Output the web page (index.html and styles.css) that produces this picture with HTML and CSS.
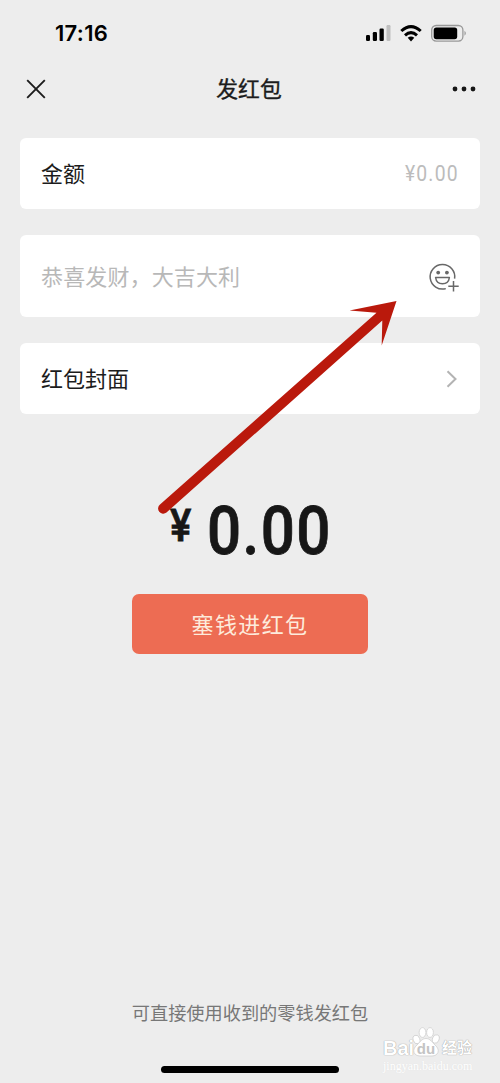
FILE: index.html
```html
<!DOCTYPE html>
<html lang="zh-CN">
<head>
<meta charset="utf-8">
<title>发红包</title>
<link rel="stylesheet" href="styles.css">
</head>
<body>
<div class="screen">
  <div class="status">
    <span class="time">17:16</span>
    <svg class="status-icons" width="104" height="20" viewBox="0 0 104 20">
      <rect x="1" y="11" width="4" height="6" rx="1.2"/>
      <rect x="7.800" y="8" width="4.200" height="9" rx="1.2"/>
      <rect x="14.500" y="4.500" width="4.300" height="12.500" rx="1.200"/>
      <rect x="21.500" y="1" width="4" height="16" rx="1.200" fill="#bfbfbf"/>
      <g fill="none" stroke="#000" stroke-width="3">
        <path d="M36.300 7Q46 -1.800 55.700 7"/>
        <path d="M40 11.300Q46 5.900 52 11.300"/>
      </g>
      <path d="M42.700 13.800Q46 11.300 49.300 13.800L46 17.400Z"/>
      <rect x="66.700" y="1.500" width="31.200" height="15.600" rx="4.500" fill="none" stroke="#999" stroke-width="1.300"/>
      <rect x="68.700" y="3.500" width="23.500" height="11.700" rx="2.600"/>
      <path d="M99.600 6.800Q101.600 9.300 99.600 11.800Z" fill="#777"/>
    </svg>
  </div>
  <div class="nav">
    <svg class="close" width="20" height="20" viewBox="0 0 20 20"><path d="M1.200 1.200L18.800 18.800M18.800 1.200L1.200 18.800" fill="none" stroke="#1c1c1c" stroke-width="1.900"/></svg>
    <span class="title">发红包</span>
    <svg class="more" width="24" height="6" viewBox="0 0 24 6" fill="#161616"><circle cx="3" cy="3" r="2.400"/><circle cx="12" cy="3" r="2.400"/><circle cx="21" cy="3" r="2.400"/></svg>
  </div>
  <div class="cards">
    <div class="card"><span class="label">金额</span><span class="value">¥0.00</span></div>
    <div class="card wish">
      <span class="placeholder">恭喜发财，大吉大利</span>
      <svg class="smile" width="32" height="30" viewBox="0 0 32 30" fill="none" stroke="#686868" stroke-width="1.500">
        <path d="M26.600 15.600A12.300 12.300 0 1 0 17.800 25.600"/>
        <path d="M7.600 14.500H21.400Q20.600 20.800 14.500 20.800T7.600 14.500Z" stroke-linejoin="round"/>
        <path d="M25.500 18V28.500M20.300 23.300H30.700"/>
        <g fill="#686868" stroke="none"><circle cx="10.200" cy="9.600" r="1.900"/><circle cx="18.900" cy="9.600" r="1.900"/></g>
      </svg>
    </div>
    <div class="card"><span class="label">红包封面</span>
      <svg class="chevron" width="12" height="18" viewBox="0 0 12 18"><path d="M1.500 1.200L9.500 9L1.500 16.800" fill="none" stroke="#b3b3b3" stroke-width="2"/></svg>
    </div>
  </div>
  <div class="total"><span class="yen">¥</span><span class="sum">0.00</span></div>
  <div class="send">塞钱进红包</div>
  <div class="note">可直接使用收到的零钱发红包</div>
  <div class="home"></div>

  <svg class="arrow" width="250" height="224" viewBox="0 0 250 224" fill="#ba190c">
    <path d="M240.500 3L193.500 12.500L220.500 14.800L4 206.500A5 5 0 0 0 10.500 214.500L226.300 22.500L225.700 47.500Z"/>
  </svg>
  <div class="watermark">
    <div class="brand">
      <span class="bai">Bai</span>
      <span class="paw">
        <svg width="28" height="30" viewBox="0 0 28 30" fill="#fff" stroke="#cfcfcf" stroke-width=".8">
          <ellipse cx="4.500" cy="12.500" rx="3.300" ry="4.400" transform="rotate(-20 4.500 12.500)"/>
          <ellipse cx="10.500" cy="5.500" rx="3.400" ry="4.900"/>
          <ellipse cx="18" cy="5.500" rx="3.400" ry="4.900"/>
          <ellipse cx="23.800" cy="12" rx="3.300" ry="4.400" transform="rotate(20 23.800 12)"/>
          <path d="M14 11.500C18 11.500 20 15 23 18C29 23 26 29 20 29H8C2 29 -1 23 5 18C8 15 10 11.500 14 11.500Z"/>
        </svg>
        <span class="du">du</span>
      </span>
      <span class="cn">经验</span>
    </div>
    <div class="domain">jingyan.baidu.com</div>
  </div>
</div>
</body>
</html>
```
FILE: styles.css
```css
* { box-sizing: border-box; }
body { margin: 0; }
svg { display: block; flex: none; }
.screen {
  position: relative;
  display: flex;
  flex-direction: column;
  width: 500px;
  height: 1083px;
  overflow: hidden;
  background: #ededed;
  color: #1c1c1c;
  font: 22px/30px "Liberation Sans", "Noto Sans CJK SC", sans-serif;
  white-space: nowrap;
}
.status {
  display: flex;
  justify-content: space-between;
  height: 60px;
  padding: 19px 31px 0 55px;
}
.time { font: 600 22px/28px Inter, sans-serif; color: #000; letter-spacing: .3px; }
.status-icons { margin-top: 5px; }
.nav {
  display: grid;
  grid-template-columns: 1fr auto 1fr;
  align-items: center;
  height: 57px;
  padding: 0 25px 0 25px;
}
.close { margin-left: 1px; }
.title { margin-right: 2px; padding-top: 2px; font-size: 21.800px; -webkit-text-stroke: .35px #1c1c1c; }
.more { justify-self: end; margin-right: -1px; }
.cards { display: flex; flex-direction: column; gap: 26px; padding: 21px 20px 0; }
.card {
  display: flex;
  align-items: center;
  justify-content: space-between;
  height: 71px;
  padding: 0 21px;
  border-radius: 6px;
  background: #fff;
}
.label { padding-top: 2px; }
.wish { height: 82px; padding-right: 20px; }
.placeholder { padding-top: 3px; color: #b8b8b8; letter-spacing: .13px; }
.smile { margin-top: 3px; }
.value {
  font: 400 21.500px/30px Roboto, sans-serif;
  color: #bcbcbc;
  letter-spacing: 1.300px;
  transform: scaleX(.9);
  transform-origin: right;
}
.chevron { margin-right: 1px; }
.total {
  display: flex;
  align-items: flex-start;
  height: 80px;
  margin-top: 91px;
  padding-left: 170px;
  color: #171717;
  font-family: Roboto, sans-serif;
  font-weight: 500;
  -webkit-text-stroke: .8px #171717;
}
.yen { width: 37px; font-size: 44px; line-height: 43px; }
.yen, .sum { transform: scaleX(.91); transform-origin: left; }
.sum { font-size: 66px; line-height: 54px; letter-spacing: 1.600px; }
.send {
  align-self: center;
  width: 236px;
  height: 60px;
  margin-top: 9px;
  border-radius: 7px;
  background: #ed6c53;
  color: #fdebdc;
  font-size: 22px;
  line-height: 63px;
  letter-spacing: 1.400px;
  text-align: center;
}
.note {
  margin-top: auto;
  color: #777;
  font-size: 18.200px;
  line-height: 28px;
  text-align: center;
}
.home {
  align-self: center;
  width: 178px;
  height: 7px;
  margin: 38px 0 10px;
  border-radius: 4px;
  background: #000;
}
.arrow { position: absolute; left: 156px; top: 298px; }
.watermark {
  position: absolute;
  left: 383px;
  top: 1027px;
  color: #fff;
  text-shadow: 0 0 1px #999, 0 0 1px #bbb;
}
.brand { display: flex; align-items: flex-end; height: 32px; font: bold 20px/22px "Liberation Sans", "Noto Sans CJK SC", sans-serif; }
.bai { width: 29px; }
.paw { display: grid; width: 28px; height: 32px; }
.paw > * { grid-area: 1 / 1; }
.du { z-index: 1; align-self: end; justify-self: center; color: #c4c4c4; font-size: 15px; line-height: 20px; text-shadow: none; }
.cn { margin-left: 2px; font-size: 15px; }
.domain { font: 12px/14px "Liberation Serif", serif; text-shadow: 0 0 1px #ddd; }
```
